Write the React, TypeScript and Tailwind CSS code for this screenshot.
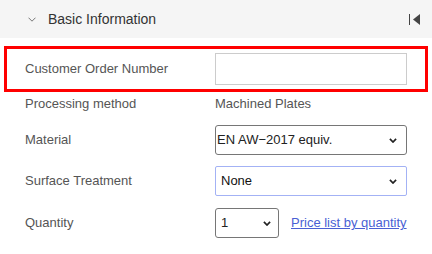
import React from "react";

const Chevron = () => (
  <svg width="8" height="5" viewBox="0 0 8 5" className="shrink-0">
    <path d="M0.9 0.9 L4 4 L7.1 0.9" fill="none" stroke="#222" strokeWidth="1.7" />
  </svg>
);

export default function App() {
  const font = { fontFamily: '"Liberation Sans", Arial, sans-serif' };
  return (
    <div className="w-[432px] h-[254px] bg-white overflow-hidden" style={font}>
      <div className="h-[38px] bg-[#f5f5f5] flex items-center pl-[28px] pr-[12px]">
        <svg width="8" height="5" viewBox="0 0 8 5" className="shrink-0 mt-[1px]">
          <path d="M0.5 0.7 L4 4.2 L7.5 0.7" fill="none" stroke="#777" strokeWidth="1" />
        </svg>
        <span className="ml-[12px] text-[14px] text-[#333]">Basic Information</span>
        <div className="ml-auto flex items-center gap-[3px]">
          <div className="w-[1px] h-[11px] bg-[#444]" />
          <svg width="7" height="11" viewBox="0 0 7 11">
            <path d="M7 0 L0 5.5 L7 11 Z" fill="#444" />
          </svg>
        </div>
      </div>

      <div className="mt-[8px] mx-[4px] border-[3px] border-[#ff0000] flex items-center pl-[18px] pr-[16px] py-[4px]">
        <span className="w-[190px] text-[13px] text-[#555]">Customer Order Number</span>
        <div className="w-[192px] h-[32px] border border-[#cccccc] bg-white" />
      </div>

      <div className="flex items-center h-[24px] pl-[25px]">
        <span className="w-[190px] text-[13px] text-[#555]">Processing method</span>
        <span className="text-[13px] text-[#555]">Machined Plates</span>
      </div>

      <div className="flex items-center h-[30px] mt-[9px] pl-[25px]">
        <span className="w-[190px] text-[13px] text-[#555]">Material</span>
        <div className="w-[192px] h-[30px] border border-[#767676] rounded-[3px] flex items-center pl-[1px] pr-[9px] text-[13px] text-[#222]">
          <span>EN AW−2017 equiv.</span>
          <div className="ml-auto"><Chevron /></div>
        </div>
      </div>

      <div className="flex items-center h-[30px] mt-[11px] pl-[25px]">
        <span className="w-[190px] text-[13px] text-[#555]">Surface Treatment</span>
        <div className="w-[192px] h-[30px] border border-[#a3b2f5] rounded-[2px] flex items-center pl-[5px] pr-[9px] text-[13px] text-[#111]">
          <span>None</span>
          <div className="ml-auto"><Chevron /></div>
        </div>
      </div>

      <div className="flex items-center h-[30px] mt-[12px] pl-[25px]">
        <span className="w-[190px] text-[13px] text-[#555]">Quantity</span>
        <div className="w-[64px] h-[30px] border border-[#767676] rounded-[3px] flex items-center pl-[5px] pr-[7px] text-[13px] text-[#222]">
          <span>1</span>
          <div className="ml-auto"><Chevron /></div>
        </div>
        <a className="ml-[12px] text-[13px] text-[#4a5fd4] underline">Price list by quantity</a>
      </div>
    </div>
  );
}
